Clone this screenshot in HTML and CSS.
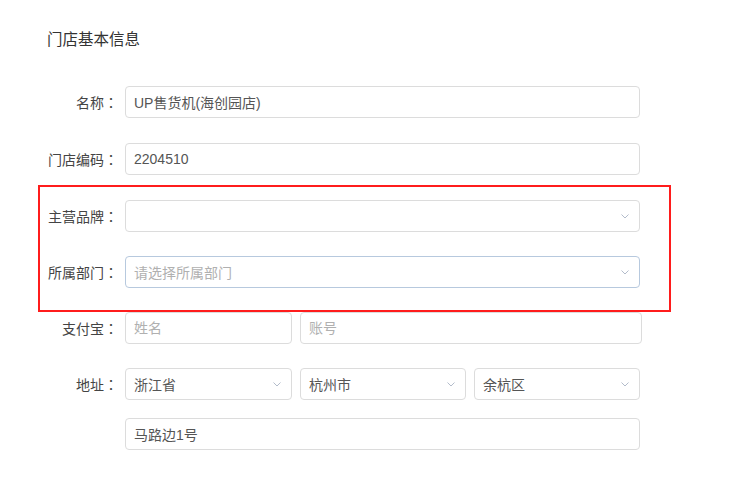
FILE: index.html
```html
<!DOCTYPE html>
<html>
<head>
    <title>门店基本信息</title>
    <link rel="stylesheet" href="styles.css">
</head>
<body>
    <div class="page">
        <h3 class="title">门店基本信息</h3>

        <div class="form">
            <div class="row">
                <label class="label">名称<span class="colon">：</span></label>
                <input class="field wide" type="text" value="UP售货机(海创园店)">
            </div>

            <div class="row">
                <label class="label">门店编码<span class="colon">：</span></label>
                <input class="field wide" type="text" value="2204510">
            </div>

            <div class="highlight">
                <div class="row">
                    <label class="label">主营品牌<span class="colon">：</span></label>
                    <div class="select wide">
                        <span class="select-text"></span>
                        <svg class="chevron" width="8" height="5" viewBox="0 0 8 5"><polyline points="0.5,0.5 4,4 7.5,0.5" fill="none" stroke="#b3bccb" stroke-width="1"/></svg>
                    </div>
                </div>

                <div class="row">
                    <label class="label">所属部门<span class="colon">：</span></label>
                    <div class="select wide focus">
                        <span class="select-text placeholder">请选择所属部门</span>
                        <svg class="chevron" width="8" height="5" viewBox="0 0 8 5"><polyline points="0.5,0.5 4,4 7.5,0.5" fill="none" stroke="#b3bccb" stroke-width="1"/></svg>
                    </div>
                </div>
            </div>

            <div class="row">
                <label class="label">支付宝<span class="colon">：</span></label>
                <div class="fields">
                    <input class="field alipay-name" type="text" placeholder="姓名">
                    <input class="field alipay-account" type="text" placeholder="账号">
                </div>
            </div>

            <div class="row">
                <label class="label">地址<span class="colon">：</span></label>
                <div class="fields">
                    <div class="select region">
                        <span class="select-text">浙江省</span>
                        <svg class="chevron" width="8" height="5" viewBox="0 0 8 5"><polyline points="0.5,0.5 4,4 7.5,0.5" fill="none" stroke="#b3bccb" stroke-width="1"/></svg>
                    </div>
                    <div class="select region">
                        <span class="select-text">杭州市</span>
                        <svg class="chevron" width="8" height="5" viewBox="0 0 8 5"><polyline points="0.5,0.5 4,4 7.5,0.5" fill="none" stroke="#b3bccb" stroke-width="1"/></svg>
                    </div>
                    <div class="select region">
                        <span class="select-text">余杭区</span>
                        <svg class="chevron" width="8" height="5" viewBox="0 0 8 5"><polyline points="0.5,0.5 4,4 7.5,0.5" fill="none" stroke="#b3bccb" stroke-width="1"/></svg>
                    </div>
                </div>
            </div>

            <div class="row row-sub">
                <span class="label"></span>
                <input class="field wide" type="text" value="马路边1号">
            </div>
        </div>
    </div>
</body>
</html>
```

FILE: styles.css
```css
body {
    margin: 0;
    background: #fff;
    font-family: "Liberation Sans", "Noto Sans CJK SC", sans-serif;
    color: #555;
}
.page {
    padding: 30px 0 0 40px;
}
.title {
    margin: 0 0 36px 7px;
    font-size: 15.5px;
    font-weight: normal;
    line-height: 20px;
    color: #333;
}
.form {
    display: flex;
    flex-direction: column;
    align-items: flex-start;
}
.row {
    display: flex;
    align-items: center;
    height: 32px;
}
.row + .row {
    margin-top: 25px;
}
.highlight .row + .row,
.highlight + .row + .row {
    margin-top: 24px;
}
.row.row-sub {
    margin-top: 18px;
}
.label {
    width: 78px;
    margin-right: 7px;
    text-align: right;
    font-size: 14px;
    color: #444;
}
.colon {
    font-family: "Noto Sans CJK TC", sans-serif;
}
.highlight {
    box-sizing: border-box;
    width: 633px;
    margin: 10px 0 0 -2px;
    padding: 13px 0 22px 0;
    border: 2px solid #ff1c1c;
}
.fields {
    display: flex;
    gap: 8px;
}
.field,
.select {
    box-sizing: border-box;
    height: 32px;
    padding: 0 8px;
    border: 1px solid #dcdcdc;
    border-radius: 4px;
    background: #fff;
    font-family: inherit;
    font-size: 14px;
    color: #555;
}
.field::placeholder {
    color: #b0b0b0;
}
.wide { width: 515px; }
.alipay-name { width: 167px; }
.alipay-account { width: 342px; }
.region { width: 166px; }
.region:first-child { width: 167px; }
.select {
    display: flex;
    align-items: center;
    justify-content: space-between;
    padding-right: 10px;
}
.select.focus {
    border-color: #b7c9de;
}
.select-text.placeholder {
    color: #b0b0b0;
}
.chevron {
    display: block;
}
```
